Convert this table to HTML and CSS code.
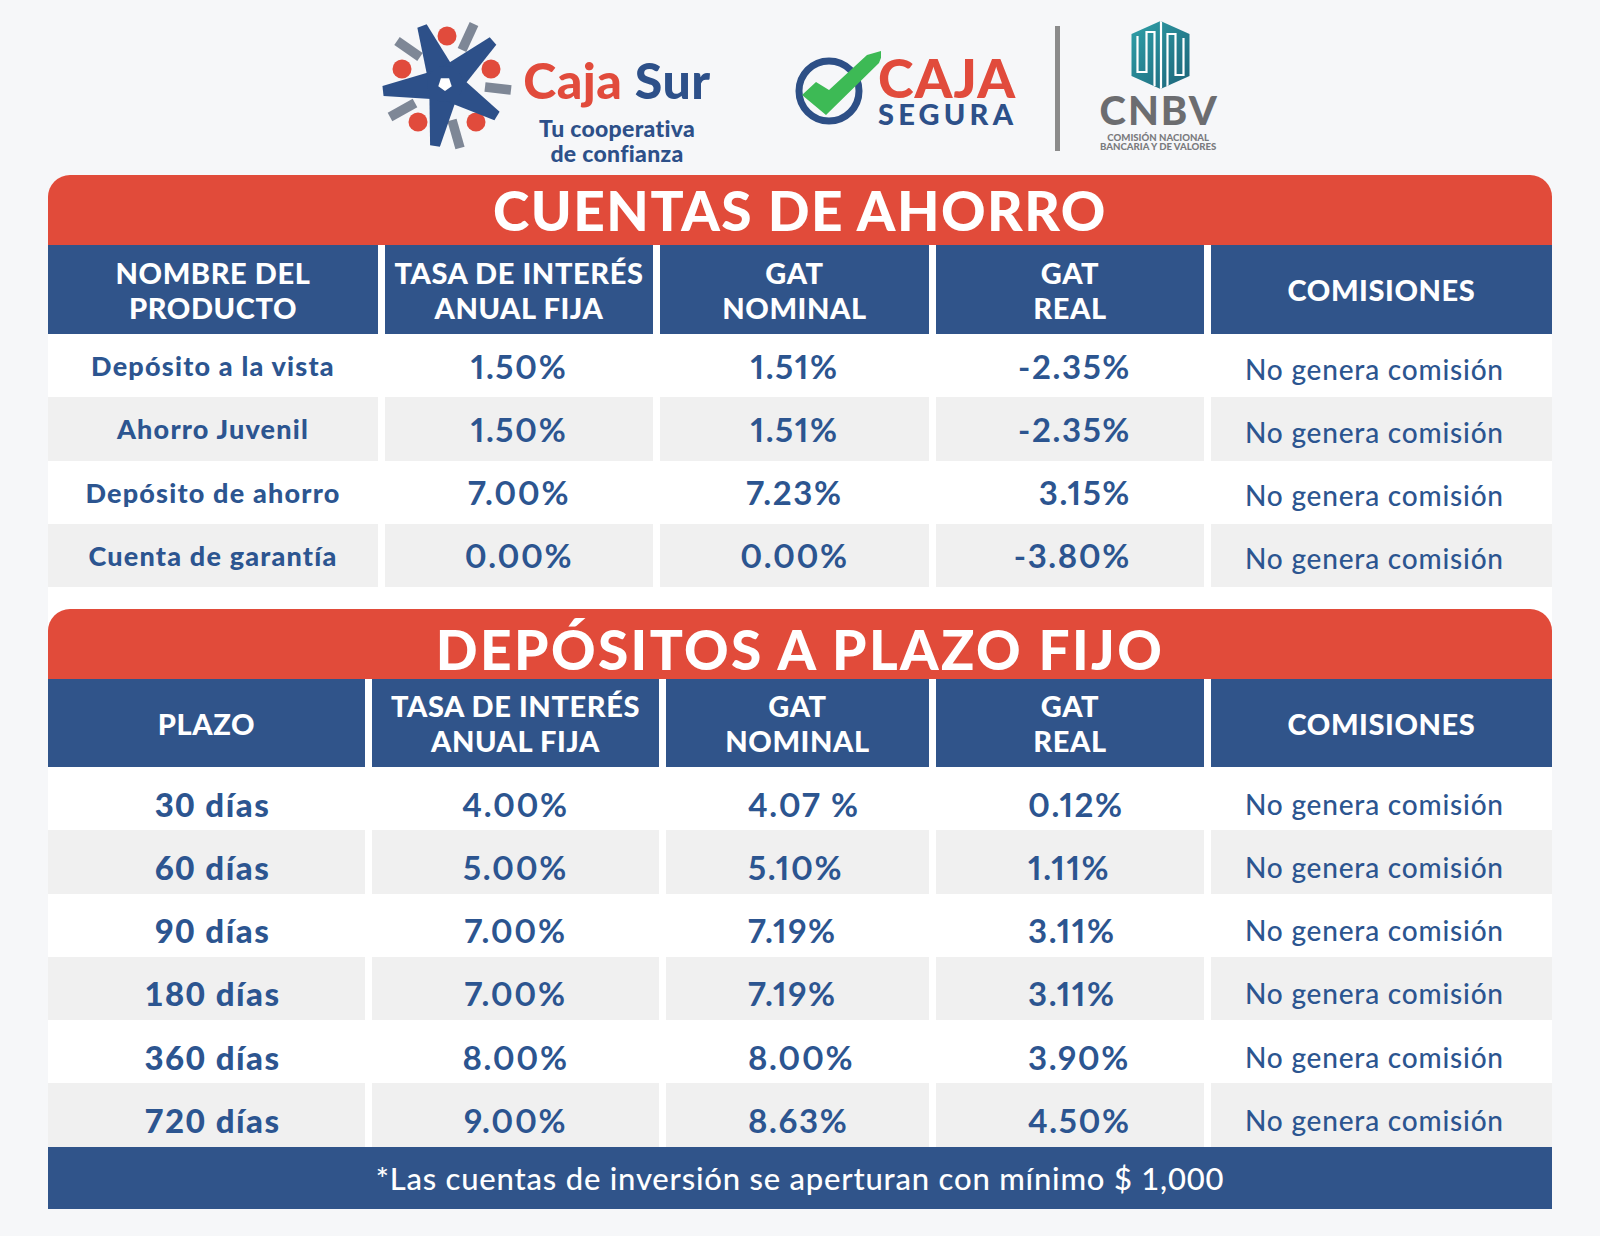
FILE: index.html
```html
<!DOCTYPE html>
<html lang="es">
<head>
<meta charset="utf-8">
<title>Caja Sur - Tasas</title>
<link rel="stylesheet" href="styles.css">
</head>
<body>
<div class="page">
  <header class="logos">
    <div class="cajasur">
      <svg class="cs-icon" viewBox="0 0 140 140" width="140" height="140" aria-hidden="true">
        <g fill="#e14b3c">
          <circle cx="67" cy="17" r="9.5"/>
          <circle cx="22" cy="50" r="9.5"/>
          <circle cx="111" cy="50" r="9.5"/>
          <circle cx="38" cy="103" r="9.5"/>
          <circle cx="96" cy="103" r="9.5"/>
        </g>
        <g stroke="#7e8796" stroke-width="9.5" stroke-linecap="butt">
          <line x1="94" y1="5" x2="82" y2="31"/>
          <line x1="17" y1="22" x2="40" y2="38"/>
          <line x1="105" y1="68" x2="131" y2="71"/>
          <line x1="10" y1="98" x2="35" y2="84"/>
          <line x1="72" y1="101" x2="80" y2="129"/>
        </g>
        <g fill="#2d5089">
          <polygon points="79.9,59.1 46.65,5.15 37.35,8.85 50.1,70.9"/>
          <polygon points="75.7,76.9 116.3,25.7 109.7,18.3 54.3,53.1"/>
          <polygon points="63.2,49.1 2.44,67 3.56,77 66.8,80.9"/>
          <polygon points="49.2,62.5 50.1,126.2 59.9,127.8 80.8,67.5"/>
          <polygon points="56.6,78.6 114.4,101.3 119.6,92.7 73.4,51.4"/>
          <circle cx="65" cy="65" r="18"/>
        </g>
        <polygon fill="#ffffff" points="65,72 58.3,67.2 60.9,59.3 69.1,59.3 71.7,67.2"/>
      </svg>
      <div class="cs-text">
        <div class="cs-name"><span class="c-red">Caja</span> <span class="c-blue">Sur</span></div>
        <div class="cs-tag">Tu cooperativa<br>de confianza</div>
      </div>
    </div>

    <div class="segura">
      <svg class="seg-icon" viewBox="0 0 90 90" width="90" height="90" aria-hidden="true">
        <circle cx="38" cy="47" r="30" fill="none" stroke="#2d4f86" stroke-width="7"/>
        <polygon fill="#3dba55" points="11,51 25,38 38,46 76,11 93,6 88,19 35,71"/>
      </svg>
      <div class="seg-text">
        <div class="seg-caja">CAJA</div>
        <div class="seg-segura">SEGURA</div>
      </div>
    </div>

    <div class="divider"></div>

    <div class="cnbv">
      <svg class="cnbv-icon" viewBox="8 4 62 70" width="63" height="70" aria-hidden="true">
        <defs>
          <linearGradient id="teal" x1="0" y1="0" x2="1" y2="1">
            <stop offset="0" stop-color="#2fa0a8"/>
            <stop offset="1" stop-color="#1d6479"/>
          </linearGradient>
          <clipPath id="hex">
            <polygon points="39,5 68,18 68,60 39,73 10,60 10,18"/>
          </clipPath>
        </defs>
        <polygon fill="url(#teal)" points="39,5 68,18 68,60 39,73 10,60 10,18"/>
        <g clip-path="url(#hex)" fill="none" stroke="#ffffff" stroke-width="2.2">
          <polyline points="16,20 16,56 25,56 25,16 33,16 33,70"/>
          <line x1="39.5" y1="2" x2="39.5" y2="78"/>
          <polyline points="46,72 46,18 54,18 54,59 62,59 62,22"/>
        </g>
      </svg>
      <div class="cnbv-name">CNBV</div>
      <div class="cnbv-sub">COMISIÓN NACIONAL<br>BANCARIA Y DE VALORES</div>
    </div>
  </header>

  <main class="sheet">
    <section class="block">
      <h2 class="title">CUENTAS DE AHORRO</h2>
      <div class="grid g1">
        <div class="th">NOMBRE DEL<br>PRODUCTO</div>
        <div class="th">TASA DE INTERÉS<br>ANUAL FIJA</div>
        <div class="th">GAT<br>NOMINAL</div>
        <div class="th">GAT<br>REAL</div>
        <div class="th">COMISIONES</div>

        <div class="td name">Depósito a la vista</div>
        <div class="td val">1.50%</div>
        <div class="td val">1.51%</div>
        <div class="td val right">-2.35%</div>
        <div class="td com">No genera comisión</div>

        <div class="td name alt">Ahorro Juvenil</div>
        <div class="td val alt">1.50%</div>
        <div class="td val alt">1.51%</div>
        <div class="td val right alt">-2.35%</div>
        <div class="td com alt">No genera comisión</div>

        <div class="td name">Depósito de ahorro</div>
        <div class="td val">7.00%</div>
        <div class="td val">7.23%</div>
        <div class="td val right">3.15%</div>
        <div class="td com">No genera comisión</div>

        <div class="td name alt">Cuenta de garantía</div>
        <div class="td val alt">0.00%</div>
        <div class="td val alt">0.00%</div>
        <div class="td val right alt">-3.80%</div>
        <div class="td com alt">No genera comisión</div>
      </div>
    </section>

    <section class="block b2">
      <h2 class="title t2">DEPÓSITOS A PLAZO FIJO</h2>
      <div class="grid g2">
        <div class="th">PLAZO</div>
        <div class="th">TASA DE INTERÉS<br>ANUAL FIJA</div>
        <div class="th">GAT<br>NOMINAL</div>
        <div class="th">GAT<br>REAL</div>
        <div class="th">COMISIONES</div>

        <div class="td plazo">30 días</div>
        <div class="td val">4.00%</div>
        <div class="td val left3">4.07 %</div>
        <div class="td val left4">0.12%</div>
        <div class="td com">No genera comisión</div>

        <div class="td plazo alt">60 días</div>
        <div class="td val alt">5.00%</div>
        <div class="td val left3 alt">5.10%</div>
        <div class="td val left4 alt">1.11%</div>
        <div class="td com alt">No genera comisión</div>

        <div class="td plazo">90 días</div>
        <div class="td val">7.00%</div>
        <div class="td val left3">7.19%</div>
        <div class="td val left4">3.11%</div>
        <div class="td com">No genera comisión</div>

        <div class="td plazo alt">180 días</div>
        <div class="td val alt">7.00%</div>
        <div class="td val left3 alt">7.19%</div>
        <div class="td val left4 alt">3.11%</div>
        <div class="td com alt">No genera comisión</div>

        <div class="td plazo">360 días</div>
        <div class="td val">8.00%</div>
        <div class="td val left3">8.00%</div>
        <div class="td val left4">3.90%</div>
        <div class="td com">No genera comisión</div>

        <div class="td plazo alt">720 días</div>
        <div class="td val alt">9.00%</div>
        <div class="td val left3 alt">8.63%</div>
        <div class="td val left4 alt">4.50%</div>
        <div class="td com alt">No genera comisión</div>
      </div>
      <div class="footer">*Las cuentas de inversión se aperturan con mínimo $ 1,000</div>
    </section>
  </main>
</div>
</body>
</html>
```

FILE: styles.css
```css
* { box-sizing: border-box; }

html, body {
  margin: 0;
  padding: 0;
}

body {
  background: #f6f7f9;
  font-family: "Lato", "Open Sans", "DejaVu Sans", sans-serif;
  color: #2c5590;
  width: 1600px;
  height: 1236px;
  overflow: hidden;
}

.page {
  width: 1600px;
}

/* ---------- logos ---------- */
.logos {
  height: 175px;
  display: flex;
  align-items: center;
  padding-left: 380px;
  padding-top: 2px;
}

.cajasur {
  display: flex;
  align-items: center;
  align-self: stretch;
}

.cs-icon {
  display: block;
  width: 140px;
  height: 140px;
}

.cs-text {
  margin-left: 2px;
  display: flex;
  flex-direction: column;
  align-items: center;
  width: 190px;
  align-self: flex-start;
  margin-top: 50px;
}

.cs-name {
  font-size: 50px;
  font-weight: 900;
  line-height: 56px;
  letter-spacing: 0.5px;
  white-space: nowrap;
}

.c-red { color: #e14b3c; }
.c-blue { color: #2d5089; }

.cs-tag {
  margin-top: 8px;
  font-size: 23px;
  line-height: 25px;
  font-weight: 900;
  letter-spacing: 0.3px;
  text-align: center;
  color: #2d5089;
  white-space: nowrap;
}

.segura {
  display: flex;
  align-items: center;
  margin-left: 79px;
}

.seg-icon {
  display: block;
  width: 90px;
  height: 90px;
}

.seg-text {
  display: flex;
  flex-direction: column;
  align-items: flex-start;
  margin-left: -3px;
  margin-top: 6px;
}

.seg-caja {
  font-size: 54px;
  line-height: 44px;
  font-weight: 900;
  color: #e14b3c;
  letter-spacing: 1px;
}

.seg-segura {
  font-size: 29px;
  line-height: 28px;
  font-weight: 900;
  color: #2d5089;
  letter-spacing: 4.2px;
}

.divider {
  width: 5px;
  height: 125px;
  background: #8b8b8b;
  margin-left: 38px;
  align-self: flex-start;
  margin-top: 24px;
}

.cnbv {
  margin-left: 37px;
  width: 122px;
  display: flex;
  flex-direction: column;
  align-items: center;
  align-self: flex-start;
  margin-top: 18px;
}

.cnbv-icon {
  display: block;
  width: 63px;
  height: 70px;
  margin-left: 4px;
}

.cnbv-name {
  font-size: 40px;
  line-height: 36px;
  font-weight: 900;
  color: #6c6d70;
  letter-spacing: 2px;
  margin-top: 2px;
  padding-left: 2px;
}

.cnbv-sub {
  font-size: 9.6px;
  line-height: 9.3px;
  font-weight: 900;
  color: #7a7b7e;
  text-align: center;
  margin-top: 5px;
  white-space: nowrap;
}

/* ---------- tables ---------- */
.sheet {
  margin-left: 48px;
  width: 1504px;
  background: #ffffff;
  border-radius: 22px 22px 0 0;
}

.block + .block {
  margin-top: 22px;
}

.title {
  margin: 0;
  height: 70px;
  background: #e14b3a;
  border-radius: 22px 22px 0 0;
  color: #ffffff;
  font-size: 55px;
  font-weight: 900;
  letter-spacing: 1.5px;
  line-height: 70px;
  text-align: center;
}

.t2 {
  line-height: 80px;
  letter-spacing: 2.4px;
}

.grid {
  display: grid;
  column-gap: 7px;
  row-gap: 0;
}

.g1 {
  grid-template-columns: 330px 268px 269px 268px 341px;
  grid-template-rows: 89px repeat(4, 63.25px);
}

.g2 {
  grid-template-columns: 317px 287px 263px 268px 341px;
  grid-template-rows: 88px repeat(6, 63.25px);
}

.th {
  background: #30548a;
  color: #ffffff;
  font-size: 29px;
  font-weight: 900;
  line-height: 35px;
  letter-spacing: 0.6px;
  display: flex;
  align-items: center;
  justify-content: center;
  text-align: center;
  white-space: nowrap;
}

.td {
  background: #ffffff;
  display: flex;
  align-items: center;
  justify-content: center;
  white-space: nowrap;
  color: #2c5590;
}

.td.alt {
  background: #f0f0f0;
}

.name {
  font-size: 27px;
  font-weight: 900;
  letter-spacing: 1.2px;
}

.val {
  font-size: 33px;
  font-weight: 700;
  letter-spacing: 1.6px;
  font-variant-numeric: proportional-nums;
}

.val.right {
  justify-content: flex-end;
  padding-right: 73px;
}

.com {
  font-size: 28px;
  font-weight: 500;
  letter-spacing: 0.8px;
  justify-content: flex-start;
  padding-left: 34px;
  padding-top: 6px;
}

.g2 .td {
  padding-top: 10px;
}

.plazo {
  font-size: 33px;
  font-weight: 900;
  letter-spacing: 1.5px;
  padding-left: 12px;
}

.val.left3 {
  justify-content: flex-start;
  padding-left: 82px;
}

.val.left4 {
  justify-content: flex-start;
  padding-left: 92px;
}

.footer {
  height: 62px;
  background: #30548a;
  color: #ffffff;
  font-size: 31px;
  font-weight: 500;
  letter-spacing: 0.8px;
  line-height: 62px;
  text-align: center;
}
```
